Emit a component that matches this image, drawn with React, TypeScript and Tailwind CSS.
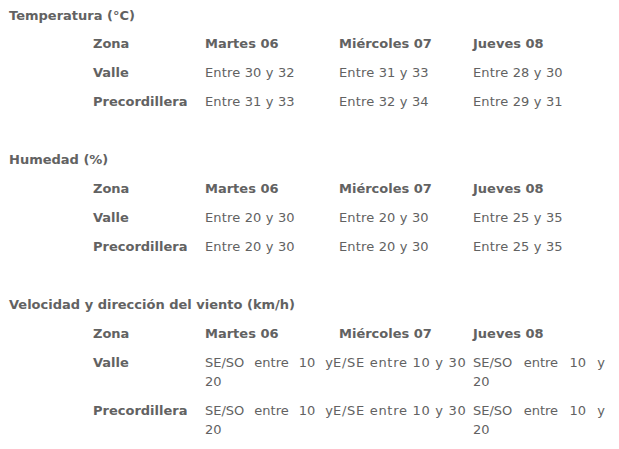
import React from "react";

const days = ["Martes 06", "Miércoles 07", "Jueves 08"];

function Cell({ children, bold }: { children: React.ReactNode; bold?: boolean }) {
  return <div className={`py-[5px] ${bold ? "font-bold" : ""}`}>{children}</div>;
}

function SimpleTable({ rows }: { rows: [string, string[]][] }) {
  return (
    <div className="ml-[84px] grid grid-cols-[112px_134px_134px_134px]">
      <Cell bold>Zona</Cell>
      {days.map((d) => (
        <Cell bold key={d}>
          {d}
        </Cell>
      ))}
      {rows.map(([zone, vals]) => (
        <React.Fragment key={zone}>
          <Cell bold>{zone}</Cell>
          {vals.map((v, i) => (
            <Cell key={i}>
              <span className="tracking-[0.15px]">{v}</span>
            </Cell>
          ))}
        </React.Fragment>
      ))}
    </div>
  );
}

function WindTable() {
  const zones = ["Valle", "Precordillera"];
  return (
    <div className="ml-[84px] grid grid-cols-[112px_134px_134px_134px]">
      <Cell bold>Zona</Cell>
      {days.map((d) => (
        <Cell bold key={d}>
          {d}
        </Cell>
      ))}
      {zones.map((zone) => (
        <React.Fragment key={zone}>
          <Cell bold>{zone}</Cell>
          <Cell>
            <div className="w-[128px] whitespace-nowrap flex justify-between">
              <span>SE/SO</span>
              <span>entre</span>
              <span>10</span>
              <span>y</span>
            </div>
            <div>20</div>
          </Cell>
          <Cell>
            <div className="-ml-[6px] whitespace-nowrap tracking-[0.7px]">E/SE entre 10 y 30</div>
          </Cell>
          <Cell>
            <div className="w-[132px] whitespace-nowrap flex justify-between">
              <span>SE/SO</span>
              <span>entre</span>
              <span>10</span>
              <span>y</span>
            </div>
            <div>20</div>
          </Cell>
        </React.Fragment>
      ))}
    </div>
  );
}

export default function App() {
  return (
    <div
      className="w-[619px] h-[449px] bg-white text-[#626262] text-[13px] leading-[19px] pl-[9px] pt-[6px] flex flex-col"
      style={{ fontFamily: '"DejaVu Sans", Verdana, sans-serif' }}
    >
      <div className="font-bold">Temperatura (°C)</div>
      <div className="mt-[4px]">
        <SimpleTable
          rows={[
            ["Valle", ["Entre 30 y 32", "Entre 31 y 33", "Entre 28 y 30"]],
            ["Precordillera", ["Entre 31 y 33", "Entre 32 y 34", "Entre 29 y 31"]],
          ]}
        />
      </div>
      <div className="font-bold mt-[34px]">Humedad (%)</div>
      <div className="mt-[5px]">
        <SimpleTable
          rows={[
            ["Valle", ["Entre 20 y 30", "Entre 20 y 30", "Entre 25 y 35"]],
            ["Precordillera", ["Entre 20 y 30", "Entre 20 y 30", "Entre 25 y 35"]],
          ]}
        />
      </div>
      <div className="font-bold mt-[34px]">Velocidad y dirección del viento (km/h)</div>
      <div className="mt-[5px]">
        <WindTable />
      </div>
    </div>
  );
}
